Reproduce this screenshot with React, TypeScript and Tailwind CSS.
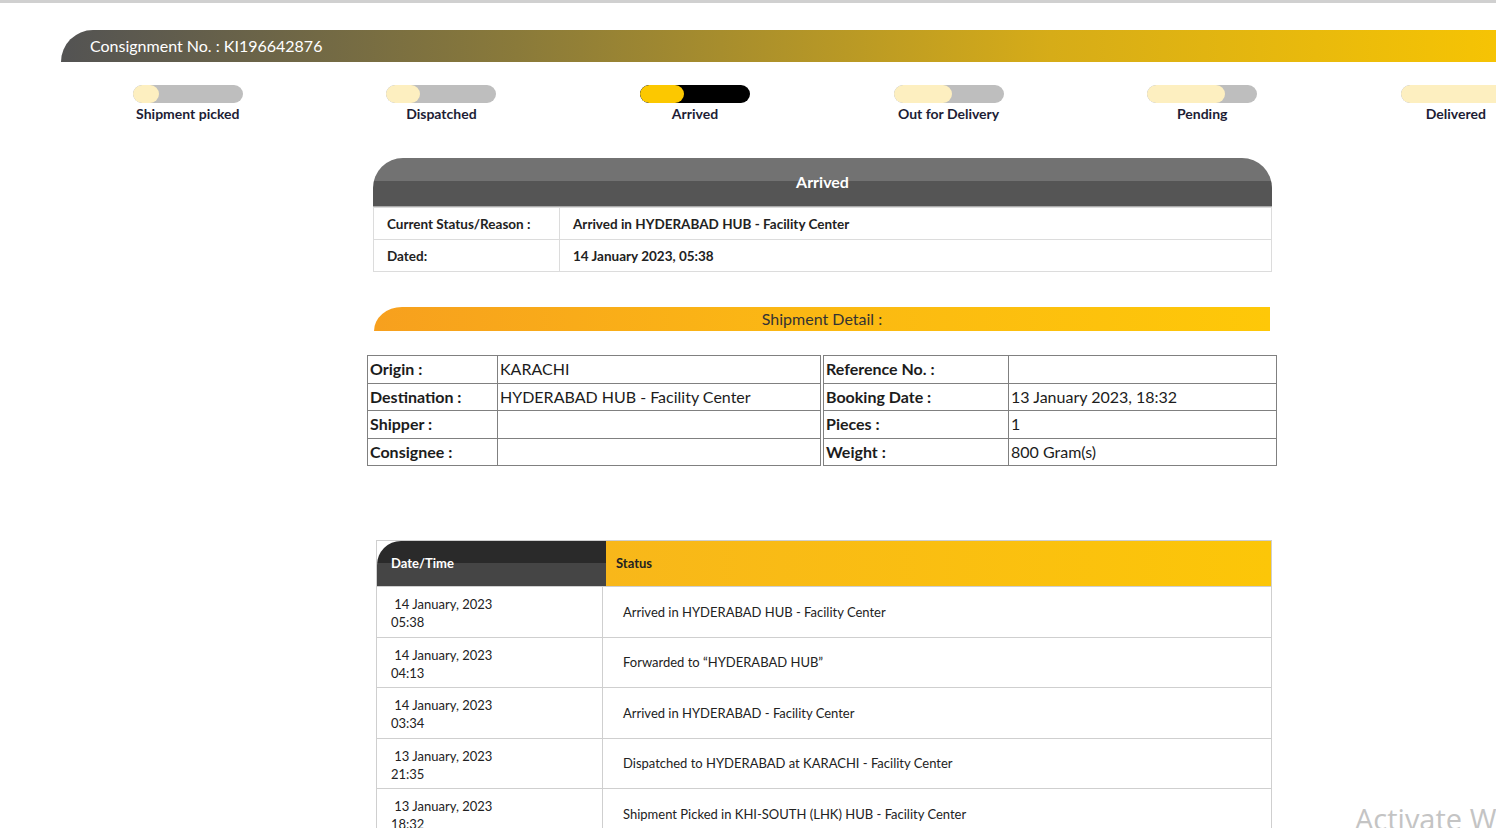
import React from "react";

const steps = [
  { label: "Shipment picked", fill: "w-[26px] bg-[#fdefc0]", track: "bg-[#bebebe]" },
  { label: "Dispatched", fill: "w-[34px] bg-[#fdefc0]", track: "bg-[#bebebe]" },
  { label: "Arrived", fill: "w-[44px] bg-[#fcc800]", track: "bg-black" },
  { label: "Out for Delivery", fill: "w-[58px] bg-[#fdefc0]", track: "bg-[#bebebe]" },
  { label: "Pending", fill: "w-[78px] bg-[#fdefc0]", track: "bg-[#bebebe]" },
  { label: "Delivered", fill: "w-[110px] bg-[#fdefc0]", track: "bg-[#bebebe]" },
];

const leftDetail = [
  ["Origin :", "KARACHI"],
  ["Destination :", "HYDERABAD HUB - Facility Center"],
  ["Shipper :", ""],
  ["Consignee :", ""],
];

const rightDetail = [
  ["Reference No. :", ""],
  ["Booking Date :", "13 January 2023, 18:32"],
  ["Pieces :", "1"],
  ["Weight :", "800 Gram(s)"],
];

const history = [
  ["14 January, 2023", "05:38", "Arrived in HYDERABAD HUB - Facility Center"],
  ["14 January, 2023", "04:13", "Forwarded to \u201cHYDERABAD HUB\u201d"],
  ["14 January, 2023", "03:34", "Arrived in HYDERABAD - Facility Center"],
  ["13 January, 2023", "21:35", "Dispatched to HYDERABAD at KARACHI - Facility Center"],
  ["13 January, 2023", "18:32", "Shipment Picked in KHI-SOUTH (LHK) HUB - Facility Center"],
];

function DetailTable({ rows, labelWidth, width }: { rows: string[][]; labelWidth: string; width: string }) {
  return (
    <table className={`${width} border-collapse border border-[#808080] text-[16px] text-[#1c1c1c]`}>
      <tbody>
        {rows.map(([k, v]) => (
          <tr key={k} className="h-[27.5px]">
            <td className={`${labelWidth} border border-[#808080] px-[2px] font-bold leading-none`}>{k}</td>
            <td className="border border-[#808080] px-[2px] leading-none">{v}</td>
          </tr>
        ))}
      </tbody>
    </table>
  );
}

export default function App() {
  return (
    <div className="relative w-[1496px] h-[828px] overflow-hidden bg-white font-['Lato',_'Open_Sans',_sans-serif]">
      <div className="h-[3px] w-full bg-[#d0d0d0]" />

      <div className="ml-[61px] mt-[27px] w-[1522px]">
        <div className="h-[32px] rounded-tl-[32px] bg-[linear-gradient(90deg,#535353_0%,#8a7a3a_30%,#d6ac18_65%,#fcc800_100%)] pl-[29px] flex items-center text-[16px] text-white">
          Consignment No. : KI196642876
        </div>

        <div className="flex mt-[23px]">
          {steps.map((s) => (
            <div key={s.label} className="w-[253.6px] flex flex-col items-center">
              <div className={`w-[110px] h-[18px] rounded-full overflow-hidden ${s.track}`}>
                <div className={`h-full rounded-full ${s.fill}`} />
              </div>
              <div className="mt-[1px] text-[14px] leading-[20px] font-bold text-[#1d1d35]">{s.label}</div>
            </div>
          ))}
        </div>
      </div>

      <div className="ml-[373px] mt-[34px] w-[899px]">
        <div className="h-[49px] rounded-t-[30px] bg-[linear-gradient(180deg,#727272_47%,#555555_47%)] flex items-center justify-center text-[16px] font-bold text-white border-b border-[#aaa]">
          Arrived
        </div>
        <table className="w-full border-collapse border border-[#dcdcdc] text-[13.5px] font-bold text-[#222]">
          <tbody>
            <tr className="h-[32px]">
              <td className="w-[186px] border border-[#dcdcdc] pl-[13px] pt-[2px]">Current Status/Reason :</td>
              <td className="border border-[#dcdcdc] pl-[13px] pt-[2px]">Arrived in HYDERABAD HUB - Facility Center</td>
            </tr>
            <tr className="h-[32px]">
              <td className="border border-[#dcdcdc] pl-[13px] pt-[2px]">Dated:</td>
              <td className="border border-[#dcdcdc] pl-[13px] pt-[2px]">14 January 2023, 05:38</td>
            </tr>
          </tbody>
        </table>
      </div>

      <div className="ml-[374px] mt-[35px] w-[896px] h-[24px] rounded-tl-[28px_24px] bg-[linear-gradient(90deg,#f7a01e_0%,#fbb714_45%,#fec808_100%)] flex items-center justify-center text-[16px] text-[#333]">
        Shipment Detail :
      </div>

      <div className="ml-[367px] mt-[24px] flex gap-[2px]">
        <DetailTable rows={leftDetail} labelWidth="w-[130px]" width="w-[454px]" />
        <DetailTable rows={rightDetail} labelWidth="w-[185px]" width="w-[454px]" />
      </div>

      <div className="ml-[376px] mt-[74px] w-[896px] border border-[#cfcfcf]">
        <div className="flex h-[46px] border-b border-[#cfcfcf]">
          <div className="w-[229px] rounded-tl-[24px] bg-[linear-gradient(180deg,#2a2a2a_48%,#454545_48%)] flex items-center pl-[14px] text-[13px] font-bold text-white">
            Date/Time
          </div>
          <div className="flex-1 bg-[linear-gradient(90deg,#f8b71a_0%,#fcc608_100%)] flex items-center pl-[10px] text-[13px] font-bold text-[#222]">
            Status
          </div>
        </div>
        {history.map(([d, t, s], i) => (
          <div key={i} className="flex h-[50.6px] border-b border-[#cfcfcf] text-[13px] text-[#222]">
            <div className="w-[226px] border-r border-[#cfcfcf] pl-[14px] pt-[8px] leading-[18px]">
              <div>&nbsp;{d}</div>
              <div>{t}</div>
            </div>
            <div className="flex-1 flex items-center pl-[20px] pt-[1px]">{s}</div>
          </div>
        ))}
      </div>

      <div className="absolute left-[1355px] top-[804px] whitespace-nowrap text-[29px] leading-none text-[#c4c4c4] font-['Open_Sans',_sans-serif]">
        Activate Windows
      </div>
    </div>
  );
}
